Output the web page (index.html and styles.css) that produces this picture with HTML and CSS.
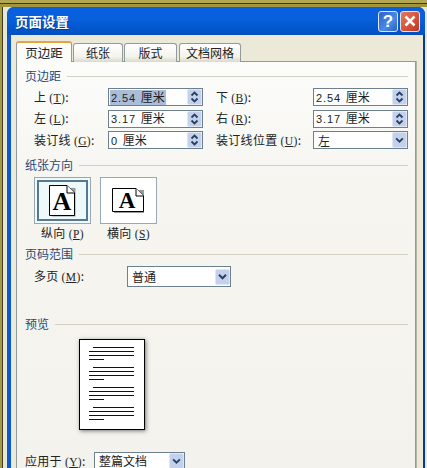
FILE: index.html
```html
<!DOCTYPE html>
<html lang="zh">
<head>
<meta charset="utf-8">
<title>页面设置</title>
<link rel="stylesheet" href="styles.css">
</head>
<body>
<svg class="defs" width="0" height="0" aria-hidden="true">
  <symbol id="spin" viewBox="0 0 15 16">
    <path d="M4.5 6.5 7.5 3.5 10.5 6.5M4.5 9.5 7.5 12.5 10.5 9.5" fill="none" stroke="#27405f" stroke-width="1.8"/>
  </symbol>
  <symbol id="drop" viewBox="0 0 17 19">
    <path d="M4.5 7.5 8.5 11.5 12.5 7.5" fill="none" stroke="#27405f" stroke-width="2.2"/>
  </symbol>
</svg>
<div class="strip"></div>
<div class="desk">
  <div class="window">
    <header class="titlebar">
      <span class="title">页面设置</span>
      <div class="caption">
        <span class="capbtn help">?</span>
        <span class="capbtn close">
          <svg viewBox="0 0 20 20" width="20" height="20"><path d="M5 5 15 15M15 5 5 15" stroke="#fff" stroke-width="2.8" fill="none"/></svg>
        </span>
      </div>
    </header>
    <div class="body">
      <nav class="tabs">
        <span class="tab active t1">页边距</span>
        <span class="tab t2">纸张</span>
        <span class="tab t3">版式</span>
        <span class="tab t4">文档网格</span>
      </nav>
      <main class="panel">
        <h2 class="head first"><span>页边距</span></h2>
        <div class="margins">
          <label class="lab">上 <span class="key">(<u>T</u>)</span>:</label>
          <div class="field"><span class="val selected"><span class="num">2.54</span> 厘米</span><span class="spin"><svg width="15" height="16"><use href="#spin"/></svg></span></div>
          <label class="lab">下 <span class="key">(<u>B</u>)</span>:</label>
          <div class="field"><span class="val"><span class="num">2.54</span> 厘米</span><span class="spin"><svg width="15" height="16"><use href="#spin"/></svg></span></div>
          <label class="lab">左 <span class="key">(<u>L</u>)</span>:</label>
          <div class="field"><span class="val"><span class="num">3.17</span> 厘米</span><span class="spin"><svg width="15" height="16"><use href="#spin"/></svg></span></div>
          <label class="lab">右 <span class="key">(<u>R</u>)</span>:</label>
          <div class="field"><span class="val"><span class="num">3.17</span> 厘米</span><span class="spin"><svg width="15" height="16"><use href="#spin"/></svg></span></div>
          <label class="lab">装订线 <span class="key">(<u>G</u>)</span>:</label>
          <div class="field"><span class="val"><span class="num">0</span> 厘米</span><span class="spin"><svg width="15" height="16"><use href="#spin"/></svg></span></div>
          <label class="lab">装订线位置 <span class="key">(<u>U</u>)</span>:</label>
          <div class="field"><span class="val cjk">左</span><span class="spin"><svg width="15" height="16" viewBox="0 0 17 19"><use href="#drop"/></svg></span></div>
        </div>

        <h2 class="head second"><span>纸张方向</span></h2>
        <div class="orient">
          <div class="choice">
            <div class="tile on">
              <svg width="27" height="32" viewBox="0 0 27 32">
                <path d="M3 3H26.5V31.5H3Z" fill="#999"/>
                <path d="M.5.5H18L25.5 8V30.5H.5Z" fill="#fff" stroke="#000"/>
                <path d="M18 .5V8H25.5" fill="#fff" stroke="#000"/>
                <text x="13" y="25" class="glyph" text-anchor="middle">A</text>
              </svg>
            </div>
            <span class="cap">纵向 <span class="key">(<u>P</u>)</span></span>
          </div>
          <div class="choice">
            <div class="tile">
              <svg width="33" height="33" viewBox="0 -4 33 33">
                <path d="M2 2H32V25H2Z" fill="#999"/>
                <path d="M.5.5H24L31.5 8V23.5H.5Z" fill="#fff" stroke="#000"/>
                <path d="M24 .5V8H31.5" fill="#fff" stroke="#000"/>
                <text x="15" y="20" class="glyph small" text-anchor="middle">A</text>
              </svg>
            </div>
            <span class="cap">横向 <span class="key">(<u>S</u>)</span></span>
          </div>
        </div>

        <h2 class="head third"><span>页码范围</span></h2>
        <div class="pages">
          <label class="lab">多页 <span class="key">(<u>M</u>)</span>:</label>
          <div class="field wide"><span class="val cjk">普通</span><span class="spin"><svg width="15" height="17" viewBox="0 0 17 19"><use href="#drop"/></svg></span></div>
        </div>

        <h2 class="head fourth"><span>预览</span></h2>
        <div class="sheet">
          <div class="para"><i class="ln indent"></i><i class="ln"></i><i class="ln"></i><i class="ln end"></i></div>
          <div class="para"><i class="ln indent"></i><i class="ln"></i><i class="ln"></i><i class="ln end"></i></div>
          <div class="para"><i class="ln indent"></i><i class="ln"></i><i class="ln"></i><i class="ln end"></i></div>
          <div class="para"><i class="ln indent"></i><i class="ln"></i><i class="ln"></i><i class="ln end"></i></div>
        </div>
        <div class="apply">
          <label class="lab applylab">应用于 <span class="key">(<u>Y</u>)</span>:</label>
          <div class="field scope"><span class="val cjk">整篇文档</span><span class="spin"><svg width="15" height="16" viewBox="0 0 17 19"><use href="#drop"/></svg></span></div>
        </div>
      </main>
    </div>
  </div>
</div>
</body>
</html>
```
FILE: styles.css
```css
* { box-sizing: border-box; }
html, body {
  margin: 0;
  width: 427px;
  height: 468px;
  overflow: hidden;
}
body {
  background: #a89b3f;
  font: 12px/14px "Noto Sans CJK SC", "Liberation Sans", sans-serif;
  color: #222;
  display: flex;
  flex-direction: column;
}
.defs { position: absolute; }
.strip {
  height: 7px;
  flex: none;
  background: linear-gradient(#b3a650 0 3px, #39382a 3px 4px, #a1943a 4px);
}
.desk {
  flex: 1;
  min-height: 0;
  margin-left: 2px;
  border-left: 1px solid #3b3a28;
  padding: 0 2px 0 4px;
  background: #e9e6d2;
  display: flex;
}
.window {
  flex: 1;
  display: flex;
  flex-direction: column;
  border-radius: 7px 7px 0 0;
  background: linear-gradient(90deg, #0a57d0 50%, #0a3a8c 50%);
  overflow: hidden;
}
.titlebar {
  height: 28px;
  flex: none;
  display: flex;
  align-items: center;
  justify-content: space-between;
  padding: 0 5px 0 8px;
  background: linear-gradient(#0a5fe0, #0860dc 40%, #0053c8 90%, #0a4fb8);
}
.title {
  font-size: 13.5px;
  font-weight: 700;
  color: #fff;
  text-shadow: 1px 1px 0 #0a3a90;
}
.caption { display: flex; gap: 2px; }
.capbtn {
  width: 20px;
  height: 21px;
  border: 1px solid #dfe9f5;
  border-radius: 3px;
  display: flex;
  align-items: center;
  justify-content: center;
}
.help {
  background: linear-gradient(135deg, #2f62c8, #4a8ae8 60%, #2c5fc0);
  color: #fff;
  font: 700 17px/1 "Liberation Sans", sans-serif;
}
.close { background: linear-gradient(135deg, #e8795a, #cf4a30 70%, #b83a24); }
.body {
  flex: 1;
  min-height: 0;
  display: flex;
  flex-direction: column;
  margin: 0 2px 0 4px;
  padding: 6px 7px 0 5px;
  background: #ece9d8;
}
.tabs {
  display: flex;
  height: 20px;
  flex: none;
  position: relative;
  z-index: 1;
}
.tab {
  height: 19px;
  margin-top: 2px;
  border: 1px solid #919b9c;
  border-bottom: 0;
  border-radius: 3px 3px 0 0;
  background: linear-gradient(#fff, #f4f3ec 70%, #dcd9c8);
  text-align: center;
  line-height: 18px;
}
.tab.active {
  height: 21px;
  margin-top: 0;
  border-top: 2px solid #e8a33d;
  background: #fbfbf8;
  line-height: 20px;
  font-size: 12.5px;
}
.t1 { width: 56px; }
.t2 { width: 50px; margin-left: 1px; }
.t3 { width: 53px; margin-left: 1px; }
.t4 { width: 62px; margin-left: 2px; }
.panel {
  flex: 1;
  min-height: 0;
  border: 1px solid #919b9c;
  border-bottom: 0;
  background: linear-gradient(#fcfcfb, #f6f5f0 30%, #f3f2ec);
  padding: 7px 0 0 8px;
  box-shadow: 1px 0 0 #b5b3a4;
}
.head {
  margin: 0;
  height: 14px;
  font: inherit;
  color: #1f4a78;
  display: flex;
  align-items: center;
  gap: 6px;
  width: 383px;
}
.head::after {
  content: "";
  flex: 1;
  height: 1px;
  background: #d2d1c2;
}
.second { margin-top: 9px; }
.third { margin-top: 6px; }
.fourth { margin-top: 30px; }
.margins {
  margin: 5px 0 0 9px;
  display: grid;
  grid-template-columns: 74px 95px 110px 95px;
  grid-auto-rows: 18px;
  row-gap: 3.5px;
  align-items: center;
}
.margins .lab:nth-of-type(even) { margin-left: 13px; }
.lab { letter-spacing: .3px; white-space: nowrap; }
.key { font-family: "Liberation Serif", serif; font-size: 11.5px; letter-spacing: .4px; }
.field {
  height: 18px;
  border: 1px solid #6c8090;
  background: #fff;
  display: flex;
  align-items: center;
  justify-content: space-between;
  padding-left: 1px;
  line-height: 13px;
}
.val { padding: 0 1px; word-spacing: 2px; }
.selected { background: #a9bcd9; }
.num {
  font-family: "Liberation Sans", sans-serif;
  font-size: 11px;
  letter-spacing: .9px;
}
.spin {
  width: 15px;
  height: 16px;
  background: #c4d1ec;
  border: 1px solid #dfe6f4;
  border-radius: 2px;
  display: flex;
  align-items: center;
  justify-content: center;
  flex: none;
}
.spin svg { flex: none; }
.orient {
  margin: 5px 0 0 9px;
  display: flex;
  gap: 9px;
}
.choice {
  width: 57px;
  display: flex;
  flex-direction: column;
  align-items: center;
}
.tile {
  width: 57px;
  height: 47px;
  border: 1px solid #9aa8b2;
  background: #fff;
  display: flex;
  align-items: center;
  justify-content: center;
}
.tile.on {
  background: #eef9fc;
  box-shadow: inset 0 0 0 2px #eef9fc, inset 0 0 0 4px #557a90;
}
.glyph {
  font: 700 26px "Liberation Serif", serif;
  fill: #000;
}
.glyph.small { font-size: 23px; }
.cap { margin-top: 2px; white-space: nowrap; letter-spacing: .3px; }
.pages {
  margin: 5px 0 0 9px;
  display: flex;
  align-items: center;
  height: 21px;
}
.pages .lab { width: 93px; }
.wide {
  width: 104px;
  height: 21px;
}
.cjk { padding-left: 3px; }
.sheet {
  margin: 8px 0 0 54px;
  width: 66px;
  height: 91px;
  border: 1px solid #000;
  background: #fff;
  box-shadow: 1px 1px 4px #777;
  padding: 7px 10px 0 9px;
}
.para { margin-bottom: 7px; }
.ln {
  display: block;
  height: 1px;
  margin-bottom: 3px;
  background: #111;
}
.para .ln:last-child { margin-bottom: 0; }
.indent { margin-left: 4px; }
.end { width: 15px; }
.apply {
  margin-top: 22px;
  display: flex;
  align-items: flex-start;
  height: 17px;
}
.applylab { width: 69px; margin-top: 2px; }
.scope {
  width: 91px;
  height: 17px;
  border-bottom: 0;
  align-items: flex-start;
}
.scope .val { margin-top: 1px; }
```
